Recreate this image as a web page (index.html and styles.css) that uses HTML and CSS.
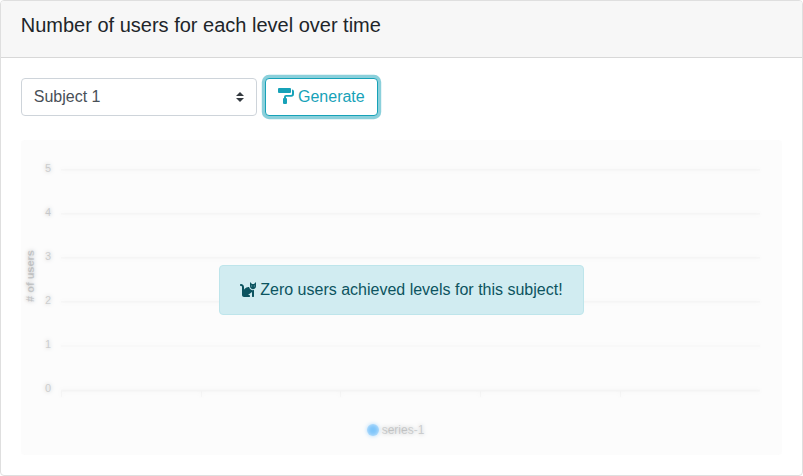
FILE: index.html
```
<!DOCTYPE html>
<html lang="en">
<head>
<meta charset="utf-8">
<title>Users per level</title>
<link rel="stylesheet" href="styles.css">
</head>
<body>
<section class="card">
  <header class="card-header"><h5 class="card-title">Number of users for each level over time</h5></header>
  <div class="card-body">
    <div class="toolbar">
      <div class="select" tabindex="0">
        <span>Subject 1</span>
        <svg class="select-arrows" viewBox="0 0 4 5"><path fill="#343a40" d="M2 0L0 2h4zm0 5L0 3h4z"/></svg>
      </div>
      <button class="btn" type="button">
        <svg class="icon" viewBox="0 0 16 16"><path d="M1 0h11a1 1 0 0 1 1 1v3a1 1 0 0 1-1 1H1a1 1 0 0 1-1-1V1a1 1 0 0 1 1-1zM14 1.5a2 2 0 0 1 2 2V6a2.8 2.8 0 0 1-2.8 2.8H8V10a1 1 0 0 1 1 1v4a1 1 0 0 1-1 1H6a1 1 0 0 1-1-1v-4a1 1 0 0 1 1-1V9a2 2 0 0 1 2-2h5a1 1 0 0 0 1-1z"/></svg>
        <span>Generate</span>
      </button>
    </div>
    <div class="chart-wrap">
      <svg class="chart" width="761" height="315" viewBox="0 0 761 315">
        <g class="grid">
          <path d="M40 29.9H739M40 73.9H739M40 117.9H739M40 161.9H739M40 206H739M40 250.2H739"/>
          <path class="axis" d="M40 251H739M40.5 251v6M180.5 251v6M319.5 251v6M459.5 251v6M599.5 251v6"/>
        </g>
        <g class="labels">
          <text x="30" y="32">5</text>
          <text x="30" y="76">4</text>
          <text x="30" y="120">3</text>
          <text x="30" y="164">2</text>
          <text x="30" y="208">1</text>
          <text x="30" y="252">0</text>
        </g>
        <text class="axis-title" transform="translate(13 136) rotate(-90)"># of users</text>
        <circle cx="352" cy="290" r="6" fill="#008ffb"/>
        <text class="legend" x="360.7" y="294">series-1</text>
      </svg>
      <div class="veil"></div>
      <div class="notice">
        <svg class="icon" viewBox="0 0 512 512"><path d="M290.59 192c-20.18 0-106.82 1.98-162.59 85.95V192c0-52.94-43.06-96-96-96-17.67 0-32 14.33-32 32s14.33 32 32 32c17.64 0 32 14.36 32 32v256c0 35.3 28.7 64 64 64h176c8.84 0 16-7.16 16-16v-16c0-17.67-14.33-32-32-32h-32l128-96v144c0 8.84 7.16 16 16 16h32c8.84 0 16-7.16 16-16V289.86c-10.29 2.67-20.89 4.54-32 4.54-61.81 0-113.52-44.05-125.41-102.4zM448 96h-64l-64-64v134.4c0 53.02 42.98 96 96 96s96-42.98 96-96V32l-64 64zm-72 80c-8.84 0-16-7.16-16-16s7.16-16 16-16 16 7.16 16 16-7.16 16-16 16zm80 0c-8.84 0-16-7.16-16-16s7.16-16 16-16 16 7.16 16 16-7.16 16-16 16z"/></svg>
        <span>Zero users achieved levels for this subject!</span>
      </div>
    </div>
  </div>
</section>
</body>
</html>
```
FILE: styles.css
```
* { box-sizing: border-box; }
body {
  margin: 0;
  background: #fff;
  color: #212529;
  font: 16px/24px "Liberation Sans", Arial, sans-serif;
}
.card {
  height: 476px;
  border: 1px solid #dfdfdf;
  border-radius: 4px;
  overflow: hidden;
}
.card-header {
  height: 57px;
  padding: 12px 19.75px;
  background: #f7f7f7;
  border-bottom: 1px solid #d8d8d8;
}
.card-title {
  margin: 0;
  font-size: 20px;
  font-weight: 400;
  line-height: 24px;
}
.card-body { padding: 20px; }
.toolbar {
  display: flex;
  gap: 8px;
  margin-bottom: 24px;
}
.select {
  display: flex;
  align-items: center;
  justify-content: space-between;
  width: 236px;
  height: 38px;
  padding: 0 12px 0 11.75px;
  border: 1px solid #ced4da;
  border-radius: 4px;
  color: #495057;
}
.select-arrows { width: 8px; height: 10px; }
.btn {
  display: flex;
  align-items: center;
  gap: 4px;
  width: 113px;
  height: 38px;
  padding: 0 12px;
  border: 1px solid #17a2b8;
  border-radius: 4px;
  background: #fff;
  box-shadow: 0 0 0 3.2px rgba(23, 162, 184, .5);
  color: #17a2b8;
  font: inherit;
}
.icon {
  flex: none;
  width: 16px;
  height: 16px;
  margin-bottom: 2px;
  fill: currentColor;
}
.chart-wrap {
  position: relative;
  width: 761px;
  height: 315px;
}
.chart { display: block; }
.grid path { fill: none; stroke: #e0e0e0; stroke-width: 1.15; }
.grid .axis { stroke-width: 1; }
.labels {
  fill: #373d3f;
  font-size: 11px;
  text-anchor: end;
}
.axis-title {
  fill: #373d3f;
  font-size: 11px;
  font-weight: 700;
  text-anchor: middle;
}
.legend { fill: #373d3f; font-size: 12px; }
.veil {
  position: absolute;
  inset: 0;
  border-radius: 4px;
  background: rgba(249, 249, 249, .8);
  opacity: .63;
  backdrop-filter: blur(2px);
}
.notice {
  position: absolute;
  top: 125px;
  left: 197.5px;
  display: flex;
  align-items: center;
  gap: 4px;
  width: 365.5px;
  height: 50px;
  padding: 0 20.75px;
  border: 1px solid #bee5eb;
  border-radius: 4px;
  background: #d1ecf1;
  color: #0c5460;
  white-space: nowrap;
}
```
